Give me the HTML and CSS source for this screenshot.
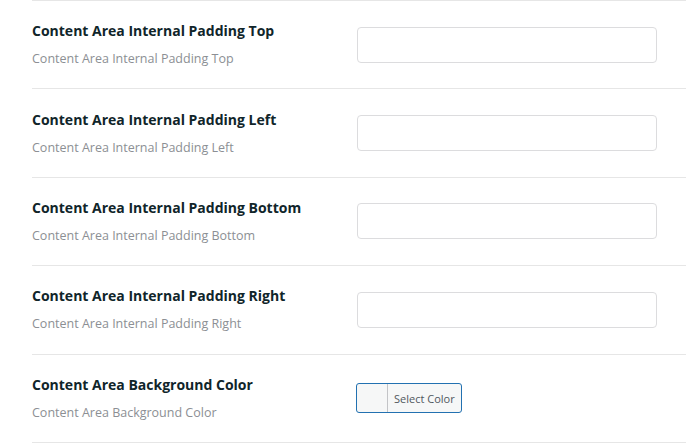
FILE: index.html
```html
<!DOCTYPE html>
<html>
<head>
<meta charset="utf-8">
<link rel="stylesheet" href="styles.css">
</head>
<body>
<div class="settings">
  <div class="row">
    <div class="label">
      <div class="title">Content Area Internal Padding Top</div>
      <div class="desc">Content Area Internal Padding Top</div>
    </div>
    <div class="field"><input class="text-input" type="text"></div>
  </div>
  <div class="row">
    <div class="label">
      <div class="title">Content Area Internal Padding Left</div>
      <div class="desc">Content Area Internal Padding Left</div>
    </div>
    <div class="field"><input class="text-input" type="text"></div>
  </div>
  <div class="row">
    <div class="label">
      <div class="title">Content Area Internal Padding Bottom</div>
      <div class="desc">Content Area Internal Padding Bottom</div>
    </div>
    <div class="field"><input class="text-input" type="text"></div>
  </div>
  <div class="row">
    <div class="label">
      <div class="title">Content Area Internal Padding Right</div>
      <div class="desc">Content Area Internal Padding Right</div>
    </div>
    <div class="field"><input class="text-input" type="text"></div>
  </div>
  <div class="row">
    <div class="label">
      <div class="title">Content Area Background Color</div>
      <div class="desc">Content Area Background Color</div>
    </div>
    <div class="field">
      <button class="color-btn" type="button"><span class="swatch"></span><span class="color-text">Select Color</span></button>
    </div>
  </div>
</div>
</body>
</html>
```
FILE: styles.css
```css
html, body {
  margin: 0;
  padding: 0;
  background: #ffffff;
}
body {
  font-family: "Open Sans", "Noto Sans", sans-serif;
}
.settings {
  margin-left: 32px;
  border-bottom: 1px solid #e6e6e6;
}
.row {
  display: flex;
  align-items: center;
  box-sizing: border-box;
  height: 88.4px;
  border-top: 1px solid #e6e6e6;
}
.label {
  width: 325px;
  display: flex;
  flex-direction: column;
  gap: 9px;
}
.title {
  font-size: 14px;
  font-weight: 700;
  color: #10252a;
  line-height: 20px;
}
.desc {
  font-size: 12.5px;
  color: #8c8f94;
  line-height: 18px;
}
.field {
  display: flex;
}
.text-input {
  box-sizing: border-box;
  width: 300px;
  height: 36px;
  margin: 0;
  border: 1px solid #dcdcde;
  border-radius: 4px;
  background: #fff;
  padding: 0 8px;
  outline: none;
}
.color-btn {
  display: flex;
  align-items: stretch;
  box-sizing: border-box;
  height: 30px;
  margin: 0 0 0 -1px;
  padding: 0;
  border: 1px solid #2271b1;
  border-radius: 3px;
  background: #f6f7f7;
  cursor: pointer;
  font-family: "Open Sans", "Noto Sans", sans-serif;
}
.swatch {
  width: 30px;
  border-right: 1px solid #c3c4c7;
}
.color-text {
  display: flex;
  align-items: center;
  padding: 0 6px 0 6px;
  font-size: 11px;
  color: #50575e;
}
```
